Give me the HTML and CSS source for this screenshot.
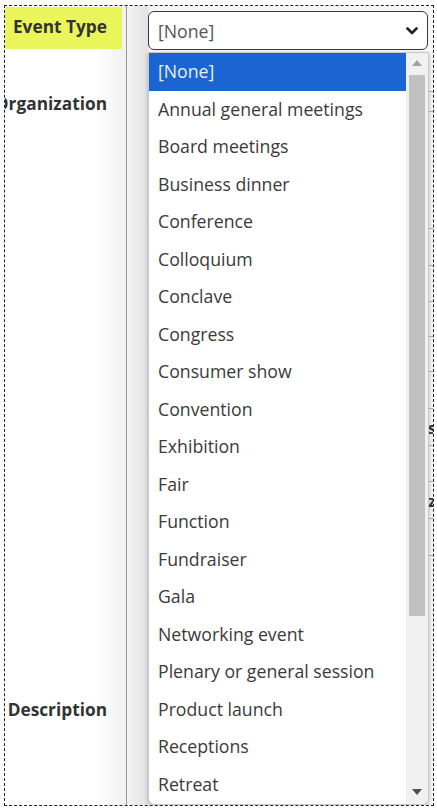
FILE: index.html
```html
<!DOCTYPE html>
<html lang="en">
<head>
<meta charset="utf-8">
<title>Event Type</title>
<link rel="stylesheet" href="styles.css">
</head>
<body>
<div class="frame">
  <div class="labels">
    <div class="label label-event">Event Type</div>
    <div class="label label-org">Organization</div>
    <div class="label label-desc">Description</div>
  </div>
  <div class="divider"></div>
  <div class="fields">
    <div class="select-wrap">
      <div class="select">
        <span class="select-value">[None]</span>
        <svg class="chev" width="12" height="8" viewBox="0 0 12 8"><polyline points="1.5,1.5 6,6 10.5,1.5" fill="none" stroke="#222" stroke-width="2.6" stroke-linecap="round" stroke-linejoin="round"/></svg>
      </div>
      <div class="listbox">
        <ul class="options">
          <li class="opt selected">[None]</li>
          <li class="opt">Annual general meetings</li>
          <li class="opt">Board meetings</li>
          <li class="opt">Business dinner</li>
          <li class="opt">Conference</li>
          <li class="opt">Colloquium</li>
          <li class="opt">Conclave</li>
          <li class="opt">Congress</li>
          <li class="opt">Consumer show</li>
          <li class="opt">Convention</li>
          <li class="opt">Exhibition</li>
          <li class="opt">Fair</li>
          <li class="opt">Function</li>
          <li class="opt">Fundraiser</li>
          <li class="opt">Gala</li>
          <li class="opt">Networking event</li>
          <li class="opt">Plenary or general session</li>
          <li class="opt">Product launch</li>
          <li class="opt">Receptions</li>
          <li class="opt">Retreat</li>
        </ul>
        <div class="scrollbar">
          <div class="arrow arrow-up"></div>
          <div class="thumb"></div>
          <div class="arrow arrow-down"></div>
        </div>
      </div>
    </div>
    <div class="behind">
      <div class="brow h40"></div>
      <div class="brow h20"></div>
      <div class="brow h117"></div>
      <div class="brow h37"></div>
      <div class="brow h36"></div>
      <div class="brow h35"></div>
      <div class="brow h35"></div>
      <div class="brow h37"></div>
      <div class="brow h37"><span class="peek">s</span></div>
      <div class="brow h36"></div>
      <div class="brow h37"><span class="peek">z</span></div>
      <div class="brow h37"></div>
    </div>
  </div>
</div>
</body>
</html>
```
FILE: styles.css
```css
* { box-sizing: border-box; }
html, body { margin: 0; padding: 0; background: #fff; }
body { font-family: "Open Sans", "Liberation Sans", sans-serif; color: #333; }

.frame {
  margin: 5px 3px 0 4px;
  width: 430px;
  height: 801px;
  border: 1px dashed #222;
  display: flex;
  overflow: hidden;
  background: #fff;
}

.labels {
  width: 121px;
  flex: none;
  display: flex;
  flex-direction: column;
  overflow: hidden;
  background: linear-gradient(to right, #fff 0, #fff 75%, #f1f1f1 100%);
}
.label {
  font-weight: 700;
  font-size: 17.3px;
  line-height: 22px;
  color: #333;
  text-align: right;
  padding-right: 19px;
  white-space: nowrap;
}
.label-event {
  margin-top: 1px;
  height: 42px;
  width: 117px;
  line-height: 40px;
  padding-right: 15px;
  background: #eaf55c;
}
.label-org { margin-top: 44px; direction: rtl; text-align: left; }
.label-desc { margin-top: 584px; }

.divider { width: 1px; flex: none; background: #9a9a9a; }

.fields {
  flex: 1;
  position: relative;
  background: linear-gradient(to right, #f3f3f3 0, #e3e3e3 21px, #f6f6f6 22px, #f6f6f6 100%);
}

.select-wrap {
  position: absolute;
  left: 21px;
  top: 5px;
  width: 281px;
  z-index: 2;
}
.select {
  height: 39px;
  width: 280px;
  border: 1px solid #3a3a3a;
  border-radius: 6px;
  background: #fff;
  display: flex;
  align-items: center;
  justify-content: space-between;
  padding: 0 9px 0 9px;
}
.select-value { font-size: 17.7px; color: #555; }
.chev { display: block; }

.listbox {
  margin-top: 2px;
  height: 753px;
  width: 281px;
  background: #fff;
  border: 1px solid #c8c8c8;
  border-radius: 0 0 7px 7px;
  box-shadow: 0 2px 4px rgba(0,0,0,0.25);
  display: flex;
  overflow: hidden;
}
.options {
  list-style: none;
  margin: 0;
  padding: 0;
  flex: 1;
}
.opt {
  height: 37.5px;
  line-height: 37.5px;
  padding-left: 9px;
  font-size: 17.7px;
  color: #3a3a3a;
  white-space: nowrap;
}
.opt.selected { background: #1a65d1; color: #e8effa; }

.scrollbar {
  width: 22px;
  flex: none;
  background: #f1f1f1;
  display: flex;
  flex-direction: column;
  align-items: center;
  padding: 0 2px;
}
.arrow { width: 0; height: 0; border-left: 5px solid transparent; border-right: 5px solid transparent; }
.arrow-up { margin-top: 7px; border-bottom: 6px solid #a3a3a3; }
.arrow-down { margin-top: auto; margin-bottom: 9px; border-top: 6px solid #505050; }
.thumb { margin-top: 9px; width: 16px; height: 541px; background: #c1c1c1; }

.behind {
  position: absolute;
  left: 22px;
  right: 0;
  top: 46px;
  display: flex;
  flex-direction: column;
  z-index: 1;
}
.brow {
  border-bottom: 1px solid #b8b8b8;
  position: relative;
}
.h20 { height: 20px; }
.h35 { height: 35px; }
.h36 { height: 36px; }
.h37 { height: 37px; }
.h40 { height: 40px; }
.h117 { height: 117px; }
.peek {
  position: absolute;
  right: -3px;
  top: 8px;
  font-size: 16px;
  font-weight: 700;
  color: #2b3550;
}
```
